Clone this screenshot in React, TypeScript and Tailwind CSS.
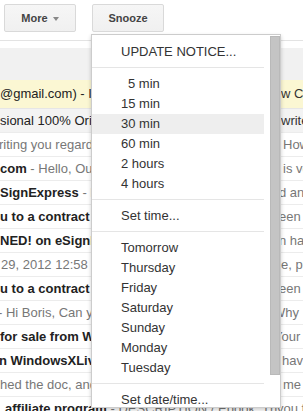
import React from "react";

type Row = {
  bg: string;
  h: string;
  lm: string;
  left: React.ReactNode;
  lw: string;
  right: React.ReactNode;
  rc: string;
};

const B = ({ children }: { children: React.ReactNode }) => (
  <span className="font-bold text-[#222]">{children}</span>
);
const G = ({ children }: { children: React.ReactNode }) => (
  <span className="text-[#777]">{children}</span>
);

const rows: Row[] = [
  { bg: "bg-[#fbf7d3]", h: "h-7", lm: "ml-0", left: <span className="text-[#222]">@gmail.com) - Invitation</span>, lw: "w-[281px]", right: "w Contract", rc: "text-[#333]" },
  { bg: "bg-[#f3f3f3] border-t border-[#e6e6e6]", h: "h-6", lm: "ml-0", left: <span className="text-[#222]">sional 100% Original Work</span>, lw: "w-[281px]", right: "writes", rc: "text-[#333]" },
  { bg: "bg-white border-t border-[#ececec]", h: "h-6", lm: "-ml-px", left: <G>riting you regarding the</G>, lw: "w-[283px]", right: "How", rc: "text-[#777]" },
  { bg: "bg-white border-t border-[#ececec]", h: "h-6", lm: "ml-0", left: <><B>com</B><G> - Hello, Our team</G></>, lw: "w-[283px]", right: "is very", rc: "text-[#777]" },
  { bg: "bg-white border-t border-[#ececec]", h: "h-6", lm: "ml-0", left: <><B>SignExpress</B><G> - Each</G></>, lw: "w-[279px]", right: "d and", rc: "text-[#777]" },
  { bg: "bg-white border-t border-[#ececec]", h: "h-6", lm: "ml-0", left: <B>u to a contract</B>, lw: "w-[279px]", right: <>een <span className="text-[#e8b54a]">i</span></>, rc: "text-[#777]" },
  { bg: "bg-white border-t border-[#ececec]", h: "h-6", lm: "ml-0", left: <B>NED! on eSignExpress</B>, lw: "w-[279px]", right: "n has", rc: "text-[#777]" },
  { bg: "bg-white border-t border-[#ececec]", h: "h-6", lm: "ml-px", left: <G>29, 2012 12:58 PM</G>, lw: "w-[281px]", right: "e, please", rc: "text-[#777]" },
  { bg: "bg-white border-t border-[#ececec]", h: "h-6", lm: "ml-0", left: <B>u to a contract</B>, lw: "w-[279px]", right: <>een <span className="text-[#e8b54a]">i</span></>, rc: "text-[#777]" },
  { bg: "bg-white border-t border-[#ececec]", h: "h-6", lm: "-ml-[2px]", left: <G>- Hi Boris, Can you</G>, lw: "w-[273px]", right: "Why", rc: "text-[#777]" },
  { bg: "bg-white border-t border-[#ececec]", h: "h-6", lm: "ml-0", left: <B>for sale from WindowsXLive</B>, lw: "w-[274px]", right: "Your", rc: "text-[#777]" },
  { bg: "bg-white border-t border-[#ececec]", h: "h-6", lm: "-ml-px", left: <B>n WindowsXLive</B>, lw: "w-[282px]", right: "have", rc: "text-[#777]" },
  { bg: "bg-white border-t border-[#ececec]", h: "h-6", lm: "ml-0", left: <G>hed the doc, and</G>, lw: "w-[283px]", right: "me", rc: "text-[#777]" },
  { bg: "bg-white border-t border-[#ececec]", h: "h-6", lm: "ml-[5px]", left: <><B>affiliate program</B><G> - DESCRIPTION / Ebook. Thank</G></>, lw: "w-[277px]", right: "you for", rc: "text-[#777]" },
];

type MenuEntry = { sep: true } | { label: string; hl?: boolean; indent?: boolean };

const menu: MenuEntry[] = [
  { label: "UPDATE NOTICE..." },
  { sep: true },
  { label: "5 min", indent: true },
  { label: "15 min" },
  { label: "30 min", hl: true },
  { label: "60 min" },
  { label: "2 hours" },
  { label: "4 hours" },
  { sep: true },
  { label: "Set time..." },
  { sep: true },
  { label: "Tomorrow" },
  { label: "Thursday" },
  { label: "Friday" },
  { label: "Saturday" },
  { label: "Sunday" },
  { label: "Monday" },
  { label: "Tuesday" },
  { sep: true },
  { label: "Set date/time..." },
];

export default function App() {
  return (
    <div className="relative w-[303px] h-[411px] overflow-hidden bg-white font-['Liberation_Sans',Arial,sans-serif] text-[13px]">
      {/* toolbar */}
      <div className="flex h-10 items-start gap-4 pl-1 pt-1">
        <div className="flex h-7 w-[72px] items-center justify-center rounded-[2px] border border-[#d9d9d9] bg-gradient-to-b from-[#f6f6f6] to-[#f0f0f0] text-[11px] font-bold text-[#444]">
          <span>More</span>
          <span className="ml-[5px] mt-px h-0 w-0 border-x-[3.5px] border-t-[4px] border-x-transparent border-t-[#888]" />
        </div>
        <div className="flex h-7 w-[72px] items-center justify-center rounded-[2px] border border-[#d9d9d9] bg-gradient-to-b from-[#f6f6f6] to-[#f0f0f0] text-[11px] font-bold text-[#444]">
          <span>Snooze</span>
        </div>
      </div>
      <div className="h-px bg-[#e3e3e3]" />
      <div className="h-[7px]" />
      <div className="h-8 bg-[#f1f1f1]" />

      {/* message rows */}
      {rows.map((r, i) => (
        <div key={i} className={`flex items-center whitespace-nowrap overflow-hidden ${r.h} ${r.bg}`}>
          <div className={`shrink-0 overflow-hidden ${r.lw}`}>
            <div className={r.lm}>{r.left}</div>
          </div>
          <div className={`shrink-0 ${r.rc}`}>{r.right}</div>
        </div>
      ))}

      {/* snooze menu */}
      <div className="absolute left-[91px] top-[34px] flex h-[374px] w-[190px] overflow-hidden border border-[rgba(0,0,0,0.2)] bg-white shadow-[0_2px_4px_rgba(0,0,0,0.2)]">
        <div className="flex w-[172px] shrink-0 flex-col pt-[7px] text-[#333]">
          {menu.map((m, i) =>
            "sep" in m ? (
              <div key={i} className="mb-[6px] mt-[5px] h-px shrink-0 bg-[#e5e5e5]" />
            ) : (
              <div
                key={i}
                className={`h-5 shrink-0 whitespace-nowrap leading-5 ${m.indent ? "pl-[36px]" : "pl-[29px]"} ${m.hl ? "bg-[#eeeeee]" : ""}`}
              >
                {m.label}
              </div>
            )
          )}
        </div>
        <div className="ml-[6px] flex w-[10px] shrink-0 flex-col pt-px">
          <div className="h-[339px] w-[10px] border border-[#b9b9b9] bg-[#c4c4c4]" />
        </div>
      </div>
    </div>
  );
}
